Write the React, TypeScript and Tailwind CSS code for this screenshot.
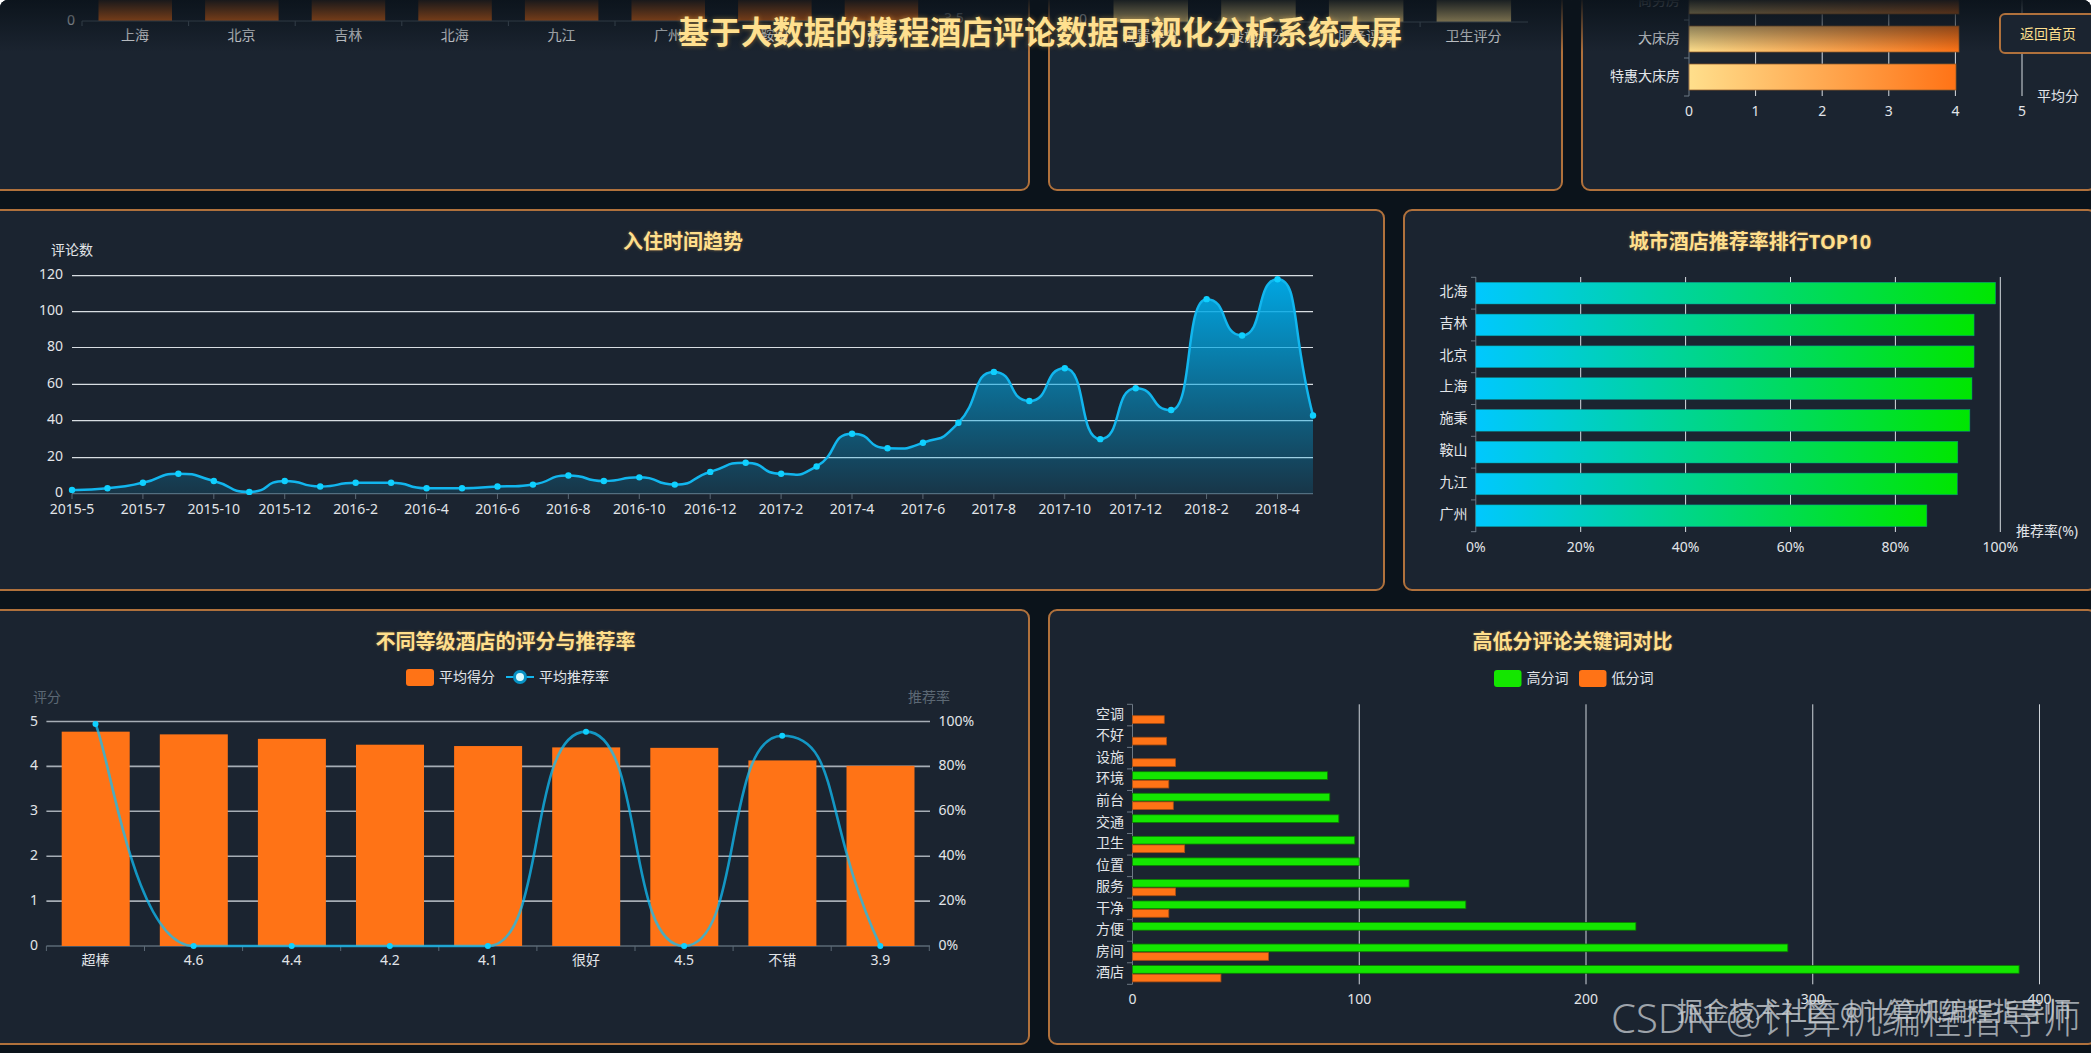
import React from "react"

type Pt = [number, number]

// monotone-ish smoothing so the peaks sit on the data points, like the chart lib does
function smoothPath(pts: Pt[], k = 0.6) {
  const slope = pts.map((p, i) => {
    if (i === 0) return (pts[1][1] - p[1]) / (pts[1][0] - p[0])
    if (i === pts.length - 1) return (p[1] - pts[i - 1][1]) / (p[0] - pts[i - 1][0])
    const a = p[1] - pts[i - 1][1]
    const b = pts[i + 1][1] - p[1]
    if (a * b <= 0) return 0
    return (pts[i + 1][1] - pts[i - 1][1]) / (pts[i + 1][0] - pts[i - 1][0])
  })
  let d = `M${pts[0][0]} ${pts[0][1]}`
  for (let i = 0; i < pts.length - 1; i++) {
    const dx = pts[i + 1][0] - pts[i][0]
    const isFirst = i === 0
    const c1x = pts[i][0] + dx * (isFirst ? 0.15 : k)
    const c1y = pts[i][1] + slope[i] * dx * (isFirst ? 0.15 : k)
    const c2x = pts[i + 1][0] - dx * k
    const c2y = pts[i + 1][1] - slope[i + 1] * dx * k
    d += ` C${c1x} ${c1y} ${c2x} ${c2y} ${pts[i + 1][0]} ${pts[i + 1][1]}`
  }
  return d
}

function Card({ className, title, children }: { className: string; title?: string; children: React.ReactNode }) {
  return (
    <div className={`shrink-0 flex flex-col bg-[#1b2430] border-2 border-[#b0713c] rounded-[9px] overflow-hidden ${className}`}>
      {title && (
        <h3 className="pt-[16px] h-[30px] text-center text-[20px] leading-[29px] font-bold text-[#ffdf8c] [text-shadow:0_0_3px_rgba(255,190,90,0.4)]">
          {title}
        </h3>
      )}
      {children}
    </div>
  )
}

// svg whose user units are the page pixels, so the numbers read off the picture can be used as they are
function Plot({ x, y, w, h, children }: { x: number; y: number; w: number; h: number; children: React.ReactNode }) {
  return (
    <svg width={w} height={h} viewBox={`${x} ${y} ${w} ${h}`} className="block">
      {children}
    </svg>
  )
}

const label = "fill-[#e2e5e9] text-[14px]"

/* ---------- top row ---------- */

const cityTop = ["上海", "北京", "吉林", "北海", "九江", "广州", "鞍山", "施秉"]

function TopCities() {
  return (
    <Plot x={-17} y={-38} w={1045} h={227}>
      {cityTop.map((c, i) => (
        <g key={c}>
          <rect x={98.5 + 106.6 * i} y={-40} width={73.5} height={61} fill="#ff7316" />
          <line x1={82 + 106.6 * i} x2={82 + 106.6 * i} y1={21} y2={26} stroke="#5b6875" />
          <text x={135 + 106.6 * i} y={34.5} textAnchor="middle" dominantBaseline="central" className={label}>{c}</text>
        </g>
      ))}
      <line x1={82} x2={935} y1={21} y2={21} stroke="#5b6875" />
      <text x={75} y={19} textAnchor="end" dominantBaseline="central" className={label}>0</text>
      <text x={954} y={17} textAnchor="middle" dominantBaseline="central" className="fill-[#8a929a] text-[14px]">3.5</text>
    </Plot>
  )
}

const scoreTop = ["位置评分", "设施评分", "服务评分", "卫生评分"]

function TopScores() {
  return (
    <Plot x={1050} y={-38} w={511} h={227}>
      {scoreTop.map((c, i) => (
        <g key={c}>
          <rect x={1113.5 + 107.7 * i} y={-40} width={74.5} height={62} fill="#ffdf8c" />
          <line x1={1097 + 107.7 * i} x2={1097 + 107.7 * i} y1={22} y2={27} stroke="#5b6875" />
          <text x={1150.5 + 107.7 * i} y={35} textAnchor="middle" dominantBaseline="central" className={label}>{c}</text>
        </g>
      ))}
      <line x1={1097} x2={1528} y1={22} y2={22} stroke="#5b6875" />
      <text x={1087} y={18} textAnchor="end" dominantBaseline="central" className={label}>0</text>
    </Plot>
  )
}

function TopRooms() {
  const bars = [
    { name: "商务房", y: -12, end: 1959 },
    { name: "大床房", y: 26, end: 1959 },
    { name: "特惠大床房", y: 64, end: 1956 },
  ]
  return (
    <Plot x={1583} y={-38} w={512} h={227}>
      <defs>
        <linearGradient id="roomBar">
          <stop offset="0" stopColor="#ffdf8c" />
          <stop offset="1" stopColor="#ff7316" />
        </linearGradient>
      </defs>
      {[0, 1, 2, 3, 4, 5].map(n => (
        <g key={n}>
          <line x1={1689 + 66.6 * n} x2={1689 + 66.6 * n} y1={-40} y2={96} stroke={n === 0 ? "#6d7884" : "#d8dde2"} />
          <text x={1689 + 66.6 * n} y={110} textAnchor="middle" dominantBaseline="central" className={label}>{n}</text>
        </g>
      ))}
      {[-18, 20, 58, 96].map(y => (
        <line key={y} x1={1684} x2={1689} y1={y} y2={y} stroke="#6d7884" />
      ))}
      {bars.map(b => (
        <g key={b.name}>
          <rect x={1689} y={b.y} width={b.end - 1689} height={26} fill="url(#roomBar)" stroke="#8f5a2a" strokeWidth={0.75} />
          <text x={1680} y={b.y + 11} textAnchor="end" dominantBaseline="central" className={label}>{b.name}</text>
        </g>
      ))}
      <text x={2037} y={95} dominantBaseline="central" className={label}>平均分</text>
    </Plot>
  )
}

/* ---------- trend ---------- */

const trend = [2, 3, 6, 11, 7, 1, 7, 4, 6, 6, 3, 3, 4, 5, 10, 7, 9, 5, 12, 17, 11, 15, 33, 25, 28, 39, 67, 51, 69, 30, 58, 46, 107, 87, 118, 43]
const trendLabels = ["2015-5", "2015-7", "2015-10", "2015-12", "2016-2", "2016-4", "2016-6", "2016-8", "2016-10", "2016-12", "2017-2", "2017-4", "2017-6", "2017-8", "2017-10", "2017-12", "2018-2", "2018-4"]
const gridY: Record<number, number> = { 120: 275.7, 100: 311.7, 80: 347.5, 60: 384.3, 40: 420.7, 20: 457.7, 0: 493.7 }

function TrendChart() {
  const pts: Pt[] = trend.map((v, i) => [72 + (1241 / 35) * i, 493.7 - v * 1.818])
  const line = smoothPath(pts, 0.62)
  return (
    <Plot x={-17} y={241} w={1400} h={348}>
      <defs>
        <linearGradient id="trendFill" gradientUnits="userSpaceOnUse" x1={0} x2={0} y1={280} y2={494}>
          <stop offset="0" stopColor="#00a9e6" stopOpacity={0.97} />
          <stop offset="1" stopColor="#00a9e6" stopOpacity={0.13} />
        </linearGradient>
      </defs>
      <text x={72} y={249} textAnchor="middle" dominantBaseline="central" className={label}>评论数</text>
      {Object.entries(gridY).map(([v, y]) => (
        <g key={v}>
          {v !== "0" && <line x1={72} x2={1313} y1={y} y2={y} stroke="#d8dde2" strokeWidth={1.2} />}
          <text x={63} y={y - 2} textAnchor="end" dominantBaseline="central" className={label}>{v}</text>
        </g>
      ))}
      <line x1={72} x2={1313} y1={493.7} y2={493.7} stroke="#5b6875" strokeWidth={1.2} />
      {trendLabels.map((t, i) => (
        <g key={t}>
          <line x1={72 + 70.91 * i} x2={72 + 70.91 * i} y1={494} y2={499} stroke="#5b6875" />
          <text x={72 + 70.91 * i} y={508} textAnchor="middle" dominantBaseline="central" className={label}>{t}</text>
        </g>
      ))}
      <path d={`${line} L1313 493.7 L72 493.7 Z`} fill="url(#trendFill)" />
      <path d={line} fill="none" stroke="#12b6ee" strokeWidth={2.5} />
      {pts.map((p, i) => (
        <circle key={i} cx={p[0]} cy={p[1]} r={3.2} fill="#0fd0ff" />
      ))}
    </Plot>
  )
}

/* ---------- city recommend ---------- */

const cityRate: [string, number][] = [["北海", 99.1], ["吉林", 95], ["北京", 95], ["上海", 94.6], ["施秉", 94.2], ["鞍山", 91.9], ["九江", 91.8], ["广州", 86]]

function CityChart() {
  return (
    <Plot x={1405} y={241} w={690} h={348}>
      <defs>
        <linearGradient id="cityBar">
          <stop offset="0" stopColor="#00c8ff" />
          <stop offset="1" stopColor="#00e600" />
        </linearGradient>
      </defs>
      {[0, 20, 40, 60, 80, 100].map(p => {
        const x = 1475.8 + 5.245 * p
        return (
          <g key={p}>
            <line x1={x} x2={x} y1={277} y2={532} stroke={p === 0 ? "#6d7884" : "#d8dde2"} />
            <text x={x} y={546} textAnchor="middle" dominantBaseline="central" className={label}>{p}%</text>
          </g>
        )
      })}
      {cityRate.map(([name, v], i) => (
        <g key={name}>
          <line x1={1471} x2={1476} y1={277.3 + 31.8 * i} y2={277.3 + 31.8 * i} stroke="#6d7884" />
          <rect x={1475.8} y={282.3 + 31.8 * i} width={v * 5.245} height={21.7} fill="url(#cityBar)" stroke="#0b8f8f" strokeWidth={0.5} />
          <text x={1467.5} y={290.5 + 31.8 * i} textAnchor="end" dominantBaseline="central" className={label}>{name}</text>
        </g>
      ))}
      <line x1={1471} x2={1476} y1={531.7} y2={531.7} stroke="#6d7884" />
      <text x={2016} y={530} dominantBaseline="central" className={label}>推荐率(%)</text>
    </Plot>
  )
}

/* ---------- level chart ---------- */

const levels: [string, number, number][] = [
  ["超棒", 4.77, 98.8], ["4.6", 4.71, 0], ["4.4", 4.61, 0], ["4.2", 4.48, 0], ["4.1", 4.45, 0],
  ["很好", 4.42, 95.4], ["4.5", 4.41, 0], ["不错", 4.13, 93.6], ["3.9", 4.01, 0],
]

function LevelChart() {
  const pts: Pt[] = levels.map((l, i) => [95.5 + 98.1 * i, 946 - l[2] * 2.247])
  return (
    <Plot x={-17} y={641} w={1045} h={402}>
      {[0, 1, 2, 3, 4, 5].map(n => {
        const y = 946 - 44.9 * n
        return (
          <g key={n}>
            <line x1={46.4} x2={930} y1={y} y2={y} stroke={n === 0 ? "#5b6875" : "#a6adb5"} strokeWidth={1.6} />
            <text x={38} y={y - 1.5} textAnchor="end" dominantBaseline="central" className={label}>{n}</text>
            <text x={938.5} y={y - 1.5} dominantBaseline="central" className={label}>{n * 20}%</text>
          </g>
        )
      })}
      {levels.map((l, i) => (
        <g key={i}>
          <rect x={61.7 + 98.1 * i} y={946 - l[1] * 134.8 / 3} width={68} height={l[1] * 134.8 / 3} fill="#ff7316" />
          <text x={95.5 + 98.1 * i} y={959.5} textAnchor="middle" dominantBaseline="central" className={label}>{l[0]}</text>
        </g>
      ))}
      {Array.from({ length: 10 }, (_, i) => (
        <line key={i} x1={46.4 + 98.1 * i} x2={46.4 + 98.1 * i} y1={946} y2={951} stroke="#5b6875" />
      ))}
      <path d={smoothPath(pts, 0.6)} fill="none" stroke="#12bdf5" strokeOpacity={0.75} strokeWidth={2.6} />
      {pts.map((p, i) => (
        <circle key={i} cx={p[0]} cy={p[1]} r={3} fill="#0fd0ff" />
      ))}

      <rect x={406} y={669} width={28} height={17} rx={3} fill="#ff7316" />
      <text x={439} y={676} dominantBaseline="central" className={label}>平均得分</text>
      <line x1={506} x2={534} y1={677} y2={677} stroke="#12b6ee" strokeWidth={2} />
      <circle cx={520} cy={677} r={7} fill="#0792c4" />
      <circle cx={520} cy={677} r={4} fill="#d9fbff" />
      <text x={539} y={676} dominantBaseline="central" className={label}>平均推荐率</text>

      <text x={33} y={696} dominantBaseline="central" className="fill-[#5c6874] text-[14px]">评分</text>
      <text x={908} y={696} dominantBaseline="central" className="fill-[#5c6874] text-[14px]">推荐率</text>
    </Plot>
  )
}

/* ---------- keyword chart ---------- */

const words: [string, number, number][] = [
  ["空调", 0, 14], ["不好", 0, 15], ["设施", 0, 19], ["环境", 86, 16], ["前台", 87, 18], ["交通", 91, 0], ["卫生", 98, 23],
  ["位置", 100, 0], ["服务", 122, 19], ["干净", 147, 16], ["方便", 222, 0], ["房间", 289, 60], ["酒店", 391, 39],
]

function KeywordChart() {
  return (
    <Plot x={1050} y={641} w={1045} h={402}>
      {[0, 100, 200, 300, 400].map(n => {
        const x = 1132.5 + 2.2675 * n
        return (
          <g key={n}>
            <line x1={x} x2={x} y1={704.3} y2={984.3} stroke={n === 0 ? "#6d7884" : "#cfd4da"} />
            <text x={x} y={998.5} textAnchor="middle" dominantBaseline="central" className={label}>{n}</text>
          </g>
        )
      })}
      {words.map(([w, hi, lo], i) => {
        const top = 704.3 + 21.54 * i
        return (
          <g key={w}>
            <line x1={1127} x2={1132.5} y1={top} y2={top} stroke="#6d7884" />
            {hi > 0 && <rect x={1132.5} y={top + 2.8} width={hi * 2.2675} height={7.7} fill="#14e600" stroke="#0a7d00" strokeWidth={0.8} />}
            {lo > 0 && <rect x={1132.5} y={top + 11.4} width={lo * 2.2675} height={7.7} fill="#ff7316" stroke="#a84d12" strokeWidth={0.8} />}
            <text x={1124} y={top + 9} textAnchor="end" dominantBaseline="central" className={label}>{w}</text>
          </g>
        )
      })}
      <line x1={1127} x2={1132.5} y1={984.3} y2={984.3} stroke="#6d7884" />

      <rect x={1494} y={670} width={27.5} height={17} rx={3} fill="#14e600" />
      <text x={1526.5} y={677} dominantBaseline="central" className={label}>高分词</text>
      <rect x={1579} y={670} width={27.5} height={17} rx={3} fill="#ff7316" />
      <text x={1611.5} y={677} dominantBaseline="central" className={label}>低分词</text>
    </Plot>
  )
}

export default function App() {
  return (
    <div className="relative w-full h-[1053px] overflow-hidden rounded-t-[8px] bg-[#0b131b] font-['Noto_Sans','Noto_Sans_CJK_SC',sans-serif]">
      <div className="flex flex-col gap-[18px] -ml-[19px] -mt-[40px] w-[2116px]">
        <div className="flex gap-[18px] h-[231px]">
          <Card className="w-[1049px]"><TopCities /></Card>
          <Card className="w-[515px]"><TopScores /></Card>
          <Card className="w-[516px]"><TopRooms /></Card>
        </div>
        <div className="flex gap-[18px] h-[382px]">
          <Card className="w-[1404px]" title="入住时间趋势"><TrendChart /></Card>
          <Card className="w-[694px]" title="城市酒店推荐率排行TOP10"><CityChart /></Card>
        </div>
        <div className="flex gap-[18px] h-[436px]">
          <Card className="w-[1049px]" title="不同等级酒店的评分与推荐率"><LevelChart /></Card>
          <Card className="w-[1049px]" title="高低分评论关键词对比"><KeywordChart /></Card>
        </div>
      </div>

      {/* fixed header over the scrolled page */}
      <header className="absolute inset-x-0 top-0 h-[52px] bg-linear-to-b from-[#0b131bf0] to-transparent">
        <h1 className="pt-[11px] pr-[11px] text-center text-[31.5px] leading-[42px] font-bold text-[#ffe08f] [text-shadow:0_0_5px_rgba(255,190,80,0.45)]">
          基于大数据的携程酒店评论数据可视化分析系统大屏
        </h1>
        <button className="absolute left-[1999px] top-[13px] w-[98px] h-[41px] border-2 border-[#b0713c] rounded-[6px] bg-[#1b2430] text-[14px] text-[#ffe08f]">
          返回首页
        </button>
      </header>

      {/* screenshot watermarks */}
      <div className="absolute left-[1677px] top-[995px] text-[26px] leading-[32px] text-[#d4d8dc]/75 whitespace-nowrap">掘金技术社区 @计算机编程指导师</div>
      <div className="absolute left-[1611px] top-[994px] text-[40px] leading-[48px] font-light text-[#c9ced3]/75 whitespace-nowrap">CSDN @计算机编程指导师</div>
    </div>
  )
}
